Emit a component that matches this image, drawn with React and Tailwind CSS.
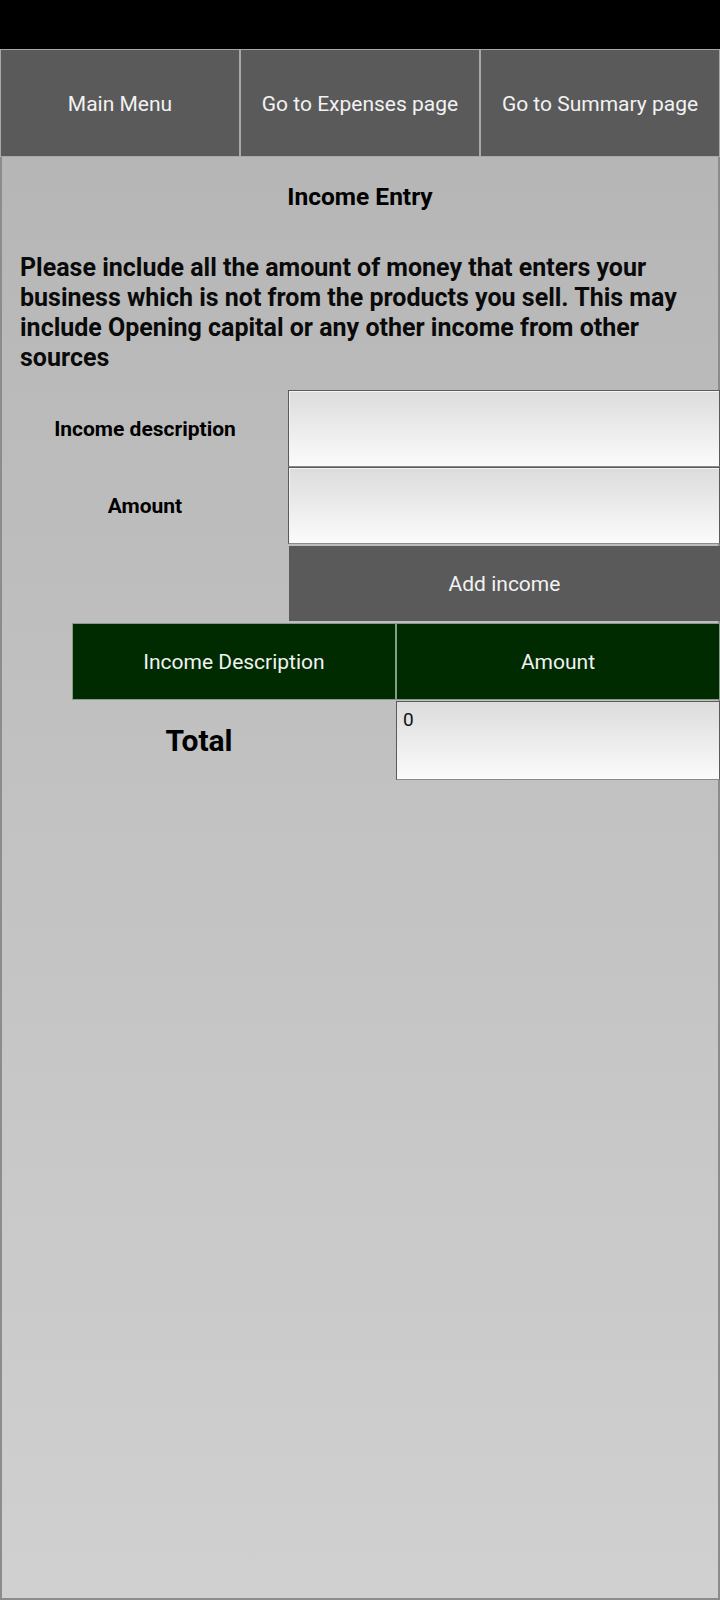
import React from "react";

const NavButton = ({ children }) => (
  <button className="flex items-center justify-center pt-[3px] bg-[#5a5a5a] border border-[#a8a8a8] text-[21px] text-[#f2f2f2]">
    {children}
  </button>
);

const Field = () => (
  <div className="h-[77px] border border-[#5a5a5a] border-b-[#8a8a8a] bg-gradient-to-b from-[#dcdcdc] to-[#fbfbfb] shadow-[inset_1px_1px_0_#f4f4f4]" />
);

const App = () => {
  return (
    <div className="w-[720px] h-[1600px] flex flex-col bg-black font-['Roboto',sans-serif]">
      <div className="h-[49px] shrink-0 bg-black" />

      {/* Top navigation */}
      <nav className="grid grid-cols-3 h-[108px] shrink-0">
        <NavButton>Main Menu</NavButton>
        <NavButton>Go to Expenses page</NavButton>
        <NavButton>Go to Summary page</NavButton>
      </nav>

      {/* Main panel */}
      <main className="flex-1 flex flex-col border-2 border-t-0 border-[#8c8c8c] bg-gradient-to-b from-[#b6b6b6] to-[#d0d0d0]">
        <h1 className="h-[80px] flex items-center justify-center text-[24.5px] font-bold text-black">
          Income Entry
        </h1>

        <p className="mt-[16px] px-[18px] text-[25px] leading-[30px] font-bold text-[#0a0a0a]">
          Please include all the amount of money that enters your business
          which is not from the products you sell. This may include Opening
          capital or any other income from other sources
        </p>

        {/* Entry form */}
        <div className="mt-[17px] -mr-[2px] grid grid-cols-[286px_1fr]">
          <div className="flex items-center justify-center pt-[3px] text-[21px] font-bold text-black">
            Income description
          </div>
          <Field />
          <div className="flex items-center justify-center pt-[3px] text-[21px] font-bold text-black">
            Amount
          </div>
          <Field />
          <div />
          <button className="mt-[2px] ml-px h-[75px] flex items-center justify-center pt-[3px] bg-[#5a5a5a] text-[21px] text-[#f2f2f2]">
            Add income
          </button>
        </div>

        {/* Income table */}
        <div className="mt-[2px] ml-[70px] -mr-[2px] grid grid-cols-2 h-[77px]">
          <div className="flex items-center justify-center pt-[3px] bg-[#002b00] border border-[#8a9a8a] text-[21px] text-[#f2f2f2]">
            Income Description
          </div>
          <div className="flex items-center justify-center pt-[3px] bg-[#002b00] border border-[#8a9a8a] text-[21px] text-[#f2f2f2]">
            Amount
          </div>
        </div>

        <div className="mt-[1px] -mr-[2px] grid grid-cols-[394px_1fr]">
          <div className="flex items-center justify-center text-[30px] font-bold text-black">
            Total
          </div>
          <div className="h-[79px] border border-[#5a5a5a] border-b-[#8a8a8a] bg-gradient-to-b from-[#dcdcdc] to-[#fbfbfb] px-[6px] pt-[4px] text-[19px] text-[#111]">
            0
          </div>
        </div>
      </main>
    </div>
  );
};

export default App;
